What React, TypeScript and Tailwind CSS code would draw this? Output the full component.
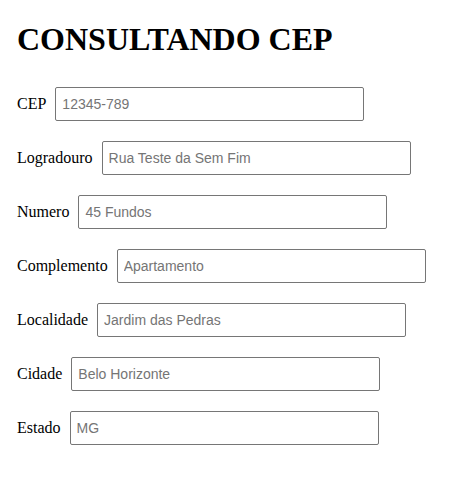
import React from 'react';

const fields = [
  { label: 'CEP', placeholder: '12345-789' },
  { label: 'Logradouro', placeholder: 'Rua Teste da Sem Fim' },
  { label: 'Numero', placeholder: '45 Fundos' },
  { label: 'Complemento', placeholder: 'Apartamento' },
  { label: 'Localidade', placeholder: 'Jardim das Pedras' },
  { label: 'Cidade', placeholder: 'Belo Horizonte' },
  { label: 'Estado', placeholder: 'MG' },
];

const App: React.FC = () => {
  return (
    <div className="min-h-[481px] bg-white pl-[17px] pt-[21px] text-black font-['Liberation_Serif',serif]">
      <h1 className="text-[32px] font-bold leading-[36px]">CONSULTANDO CEP</h1>
      <form className="mt-[30px] flex flex-col gap-[20px]">
        {fields.map((f) => (
          <div key={f.label} className="flex items-center gap-[9px]">
            <label className="text-[16px] leading-[18px]">{f.label}</label>
            <input
              type="text"
              placeholder={f.placeholder}
              className="box-border h-[34px] w-[309px] rounded-[2px] border border-[#767676] px-[6px] font-['Liberation_Sans',Arial,sans-serif] text-[14px] text-black outline-none placeholder:text-[#757575]"
            />
          </div>
        ))}
      </form>
    </div>
  );
};

export default App;
